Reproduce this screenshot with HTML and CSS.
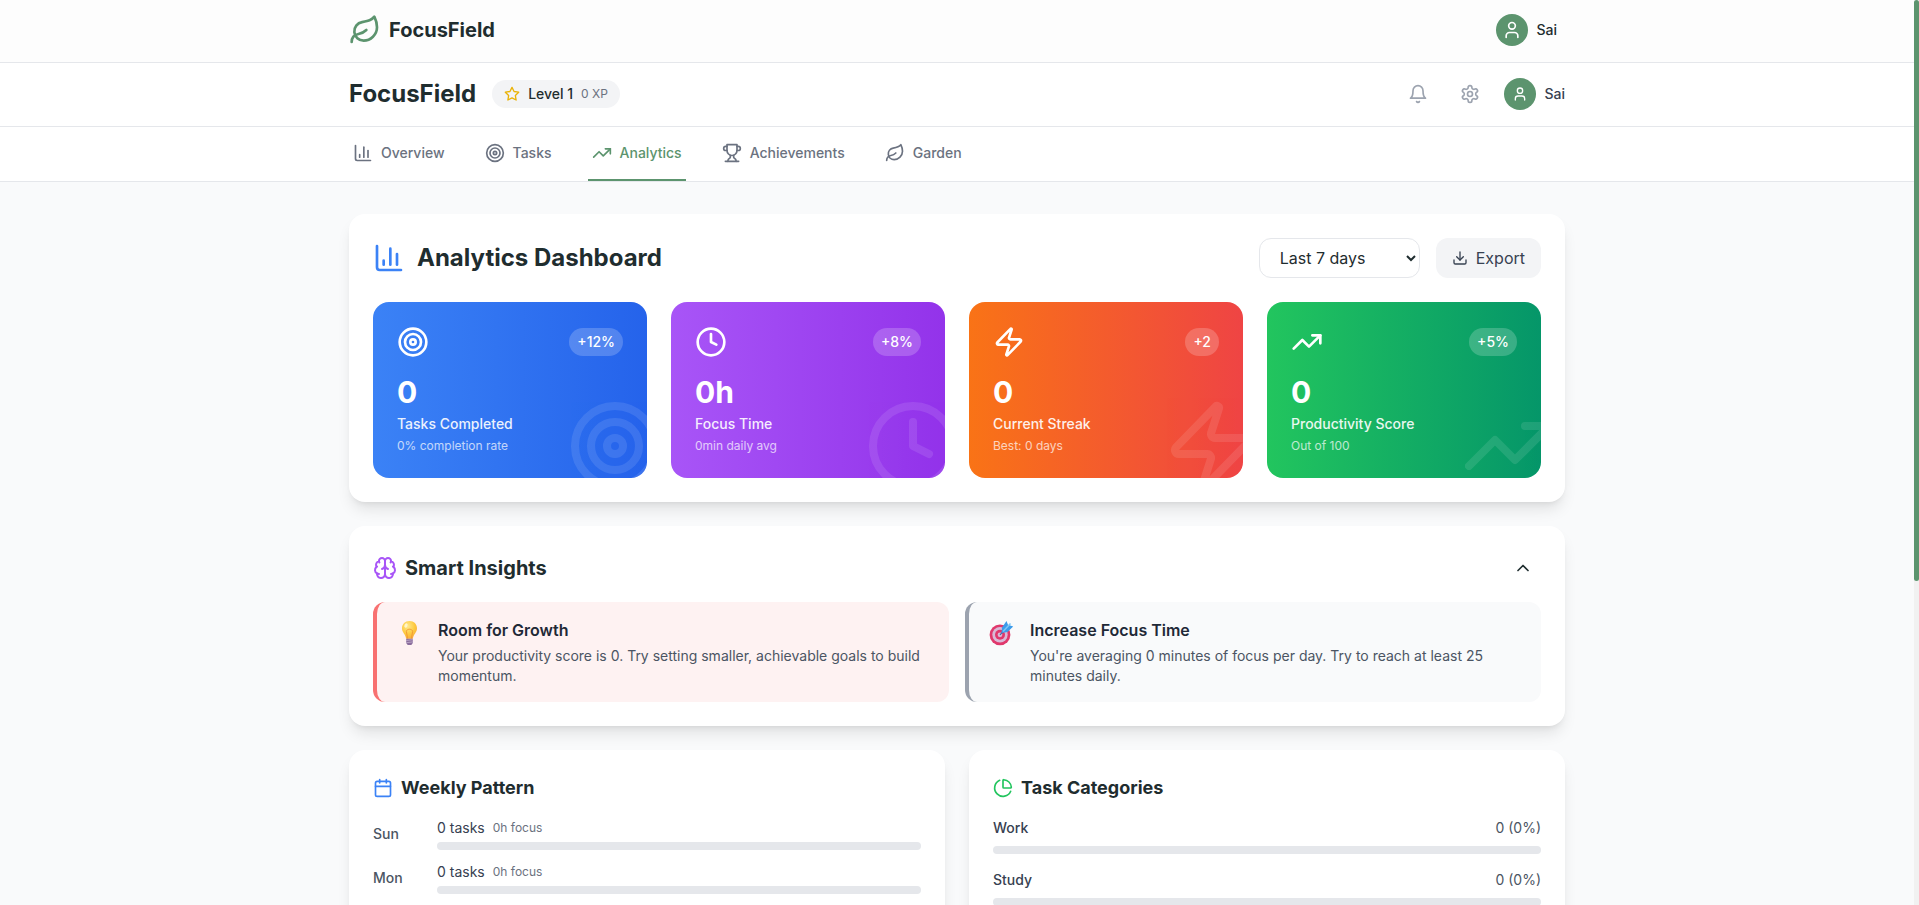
FILE: index.html
```html
<!DOCTYPE html>
<html lang="en">
<head>
    <meta charset="UTF-8">
    <meta name="viewport" content="width=device-width, initial-scale=1.0">
    <title>FocusField - Analytics</title>
    <link rel="stylesheet" href="styles.css">
</head>
<body>
    <!-- Shared icons -->
    <svg class="sprite" aria-hidden="true">
        <symbol id="leaf" viewBox="0 0 24 24">
            <path d="M11 20A7 7 0 0 1 9.8 6.1C15.5 5 17 4.48 19 2c1 2 2 4.18 2 8 0 5.5-4.78 10-10 10Z"/>
            <path d="M2 21c0-3 1.85-5.36 5.08-6C9.5 14.52 12 13 13 12"/>
        </symbol>
        <symbol id="user" viewBox="0 0 24 24">
            <path d="M19 21v-2a4 4 0 0 0-4-4H9a4 4 0 0 0-4 4v2"/>
            <circle cx="12" cy="7" r="4"/>
        </symbol>
        <symbol id="star" viewBox="0 0 24 24">
            <polygon points="12 2 15.09 8.26 22 9.27 17 14.14 18.18 21.02 12 17.77 5.82 21.02 7 14.14 2 9.27 8.91 8.26 12 2"/>
        </symbol>
        <symbol id="bell" viewBox="0 0 24 24">
            <path d="M6 8a6 6 0 0 1 12 0c0 7 3 9 3 9H3s3-2 3-9"/>
            <path d="M10.3 21a1.94 1.94 0 0 0 3.4 0"/>
        </symbol>
        <symbol id="settings" viewBox="0 0 24 24">
            <path d="M12.22 2h-.44a2 2 0 0 0-2 2v.18a2 2 0 0 1-1 1.73l-.43.25a2 2 0 0 1-2 0l-.15-.08a2 2 0 0 0-2.73.73l-.22.38a2 2 0 0 0 .73 2.73l.15.1a2 2 0 0 1 1 1.72v.51a2 2 0 0 1-1 1.74l-.15.09a2 2 0 0 0-.73 2.73l.22.38a2 2 0 0 0 2.73.73l.15-.08a2 2 0 0 1 2 0l.43.25a2 2 0 0 1 1 1.73V20a2 2 0 0 0 2 2h.44a2 2 0 0 0 2-2v-.18a2 2 0 0 1 1-1.73l.43-.25a2 2 0 0 1 2 0l.15.08a2 2 0 0 0 2.73-.73l.22-.39a2 2 0 0 0-.73-2.73l-.15-.08a2 2 0 0 1-1-1.74v-.5a2 2 0 0 1 1-1.74l.15-.09a2 2 0 0 0 .73-2.73l-.22-.38a2 2 0 0 0-2.73-.73l-.15.08a2 2 0 0 1-2 0l-.43-.25a2 2 0 0 1-1-1.73V4a2 2 0 0 0-2-2z"/>
            <circle cx="12" cy="12" r="3"/>
        </symbol>
        <symbol id="chart" viewBox="0 0 24 24">
            <path d="M3 3v16a2 2 0 0 0 2 2h16"/>
            <path d="M18 17V9"/>
            <path d="M13 17V5"/>
            <path d="M8 17v-3"/>
        </symbol>
        <symbol id="target" viewBox="0 0 24 24">
            <circle cx="12" cy="12" r="10"/>
            <circle cx="12" cy="12" r="6"/>
            <circle cx="12" cy="12" r="2"/>
        </symbol>
        <symbol id="trending" viewBox="0 0 24 24">
            <polyline points="22 7 13.5 15.5 8.5 10.5 2 17"/>
            <polyline points="16 7 22 7 22 13"/>
        </symbol>
        <symbol id="trophy" viewBox="0 0 24 24">
            <path d="M6 9H4.5a2.5 2.5 0 0 1 0-5H6"/>
            <path d="M18 9h1.5a2.5 2.5 0 0 0 0-5H18"/>
            <path d="M4 22h16"/>
            <path d="M10 14.66V17c0 .55-.47.98-.97 1.21C7.85 18.75 7 20.24 7 22"/>
            <path d="M14 14.66V17c0 .55.47.98.97 1.21C16.15 18.75 17 20.24 17 22"/>
            <path d="M18 2H6v7a6 6 0 0 0 12 0V2Z"/>
        </symbol>
        <symbol id="clock" viewBox="0 0 24 24">
            <circle cx="12" cy="12" r="10"/>
            <polyline points="12 6 12 12 16 14"/>
        </symbol>
        <symbol id="zap" viewBox="0 0 24 24">
            <path d="M4 14a1 1 0 0 1-.78-1.63l9.9-10.2a.5.5 0 0 1 .86.46l-1.92 6.02A1 1 0 0 0 13 10h7a1 1 0 0 1 .78 1.63l-9.9 10.2a.5.5 0 0 1-.86-.46l1.92-6.02A1 1 0 0 0 11 14z"/>
        </symbol>
        <symbol id="download" viewBox="0 0 24 24">
            <path d="M21 15v4a2 2 0 0 1-2 2H5a2 2 0 0 1-2-2v-4"/>
            <polyline points="7 10 12 15 17 10"/>
            <line x1="12" y1="15" x2="12" y2="3"/>
        </symbol>
        <symbol id="brain" viewBox="0 0 24 24">
            <path d="M12 5a3 3 0 1 0-5.997.125 4 4 0 0 0-2.526 5.77 4 4 0 0 0 .556 6.588A4 4 0 1 0 12 18Z"/>
            <path d="M12 5a3 3 0 1 1 5.997.125 4 4 0 0 1 2.526 5.77 4 4 0 0 1-.556 6.588A4 4 0 1 1 12 18Z"/>
            <path d="M15 13a4.5 4.5 0 0 1-3-4 4.5 4.5 0 0 1-3 4"/>
            <path d="M17.599 6.5a3 3 0 0 0 .399-1.375"/>
            <path d="M6.003 5.125A3 3 0 0 0 6.401 6.5"/>
            <path d="M3.477 10.896a4 4 0 0 1 .585-.396"/>
            <path d="M19.938 10.5a4 4 0 0 1 .585.396"/>
            <path d="M6 18a4 4 0 0 1-1.967-.516"/>
            <path d="M19.967 17.484A4 4 0 0 1 18 18"/>
        </symbol>
        <symbol id="chevron-up" viewBox="0 0 24 24">
            <path d="m18 15-6-6-6 6"/>
        </symbol>
        <symbol id="calendar" viewBox="0 0 24 24">
            <path d="M8 2v4"/>
            <path d="M16 2v4"/>
            <rect width="18" height="18" x="3" y="4" rx="2"/>
            <path d="M3 10h18"/>
        </symbol>
        <symbol id="pie" viewBox="0 0 24 24">
            <path d="M21 12c.552 0 1.005-.449.95-.998a10 10 0 0 0-8.953-8.951c-.55-.055-.998.398-.998.95v8a1 1 0 0 0 1 1z"/>
            <path d="M21.21 15.89A10 10 0 1 1 8 2.83"/>
        </symbol>
    </svg>

    <div class="page">
        <header class="site-header">
            <div class="container bar">
                <a class="logo" href="#">
                    <svg class="icon icon-xl green"><use href="#leaf"/></svg>
                    FocusField
                </a>
                <button class="account" type="button">
                    <span class="avatar"><svg class="icon"><use href="#user"/></svg></span>
                    Sai
                </button>
            </div>
        </header>

        <div class="app-header">
            <div class="container bar">
                <div class="brand">
                    <h1>FocusField</h1>
                    <div class="level">
                        <svg class="icon icon-sm yellow"><use href="#star"/></svg>
                        <span>Level 1</span>
                        <span class="xp">0 XP</span>
                    </div>
                </div>
                <div class="tools">
                    <button class="icon-button" type="button" aria-label="Notifications"><svg class="icon"><use href="#bell"/></svg></button>
                    <button class="icon-button" type="button" aria-label="Settings"><svg class="icon"><use href="#settings"/></svg></button>
                    <div class="profile">
                        <span class="avatar"><svg class="icon icon-sm"><use href="#user"/></svg></span>
                        Sai
                    </div>
                </div>
            </div>
        </div>

        <nav class="tabs">
            <div class="container tab-list">
                <button class="tab" type="button"><svg class="icon"><use href="#chart"/></svg>Overview</button>
                <button class="tab" type="button"><svg class="icon"><use href="#target"/></svg>Tasks</button>
                <button class="tab active" type="button"><svg class="icon"><use href="#trending"/></svg>Analytics</button>
                <button class="tab" type="button"><svg class="icon"><use href="#trophy"/></svg>Achievements</button>
                <button class="tab" type="button"><svg class="icon"><use href="#leaf"/></svg>Garden</button>
            </div>
        </nav>

        <main class="container content">
            <section class="card">
                <div class="card-header dashboard-header">
                    <h2 class="dashboard-title"><svg class="icon icon-xl blue"><use href="#chart"/></svg>Analytics Dashboard</h2>
                    <div class="filters">
                        <select class="range" aria-label="Date range">
                            <option>Last 7 days</option>
                        </select>
                        <button class="export" type="button"><svg class="icon icon-sm"><use href="#download"/></svg>Export</button>
                    </div>
                </div>

                <div class="stats">
                    <div class="stat stat-blue">
                        <div class="stat-top">
                            <svg class="icon icon-xl"><use href="#target"/></svg>
                            <span class="change">+12%</span>
                        </div>
                        <div class="stat-value">0</div>
                        <div class="stat-label">Tasks Completed</div>
                        <div class="stat-note">0% completion rate</div>
                        <svg class="icon stat-art"><use href="#target"/></svg>
                    </div>
                    <div class="stat stat-purple">
                        <div class="stat-top">
                            <svg class="icon icon-xl"><use href="#clock"/></svg>
                            <span class="change">+8%</span>
                        </div>
                        <div class="stat-value">0h</div>
                        <div class="stat-label">Focus Time</div>
                        <div class="stat-note">0min daily avg</div>
                        <svg class="icon stat-art"><use href="#clock"/></svg>
                    </div>
                    <div class="stat stat-orange">
                        <div class="stat-top">
                            <svg class="icon icon-xl"><use href="#zap"/></svg>
                            <span class="change">+2</span>
                        </div>
                        <div class="stat-value">0</div>
                        <div class="stat-label">Current Streak</div>
                        <div class="stat-note">Best: 0 days</div>
                        <svg class="icon stat-art"><use href="#zap"/></svg>
                    </div>
                    <div class="stat stat-green">
                        <div class="stat-top">
                            <svg class="icon icon-xl"><use href="#trending"/></svg>
                            <span class="change">+5%</span>
                        </div>
                        <div class="stat-value">0</div>
                        <div class="stat-label">Productivity Score</div>
                        <div class="stat-note">Out of 100</div>
                        <svg class="icon stat-art"><use href="#trending"/></svg>
                    </div>
                </div>
            </section>

            <section class="card">
                <div class="card-header">
                    <h3 class="insights-title"><svg class="icon icon-lg purple"><use href="#brain"/></svg>Smart Insights</h3>
                    <button class="icon-button dark" type="button" aria-label="Collapse insights"><svg class="icon"><use href="#chevron-up"/></svg></button>
                </div>
                <div class="insights">
                    <div class="insight warning">
                        <svg class="emoji" viewBox="0 0 33 32" role="img" aria-label="Light bulb">
                            <defs>
                                <radialGradient id="bulb" cx="40%" cy="30%" r="75%">
                                    <stop offset="0" stop-color="#ffe88a"/>
                                    <stop offset="0.6" stop-color="#fdc93f"/>
                                    <stop offset="1" stop-color="#f9a93c"/>
                                </radialGradient>
                            </defs>
                            <path d="M16.5 3c-4.5 0-7.5 3.2-7.5 7.3 0 4.3 3.2 5.400 4.200 10.400h6.600c1-5 4.200-6.100 4.200-10.400C24 6.200 21 3 16.500 3Z" fill="url(#bulb)"/>
                            <path d="M14.6 20.5 13.4 13.5c0-3 6.200-3 6.200 0l-1.200 7" fill="none" stroke="#f29b35" stroke-width="1"/>
                            <path d="M13.2 20.7h6.600v4.200l-1.500 2h-3.600l-1.500-2Z" fill="#8a6d9c"/>
                            <path d="M13.2 22.5l6.600-.8M13.200 24.700l6.600-.8" stroke="#c5b2cf" stroke-width="0.8"/>
                            <ellipse cx="13" cy="7.5" rx="1.5" ry="2.3" fill="#fff6c9" transform="rotate(25 13 7.5)"/>
                        </svg>
                        <div>
                            <h4>Room for Growth</h4>
                            <p>Your productivity score is 0. Try setting smaller, achievable goals to build momentum.</p>
                        </div>
                    </div>
                    <div class="insight neutral">
                        <svg class="emoji" viewBox="0 0 33 32" role="img" aria-label="Target">
                            <circle cx="15" cy="16.8" r="10.4" fill="#e0386c"/>
                            <circle cx="15" cy="16.8" r="7.7" fill="#d9b8d6"/>
                            <circle cx="15" cy="16.8" r="5" fill="#e0386c"/>
                            <circle cx="15" cy="16.8" r="2.4" fill="#d9b8d6"/>
                            <path d="M15 16.8 21.5 10" stroke="#3c6fae" stroke-width="1.2"/>
                            <path d="M16.5 15 17 9.5 21.5 3 23 6.800 28.200 8.500 22.500 14Z" fill="#3c9bea"/>
                            <path d="M18 13.5 25.5 5.5" stroke="#7cc6f7" stroke-width="1.6"/>
                        </svg>
                        <div>
                            <h4>Increase Focus Time</h4>
                            <p>You're averaging 0 minutes of focus per day. Try to reach at least 25 minutes daily.</p>
                        </div>
                    </div>
                </div>
            </section>

            <div class="columns">
                <section class="card">
                    <h3 class="panel-title"><svg class="icon blue"><use href="#calendar"/></svg>Weekly Pattern</h3>
                    <div class="days">
                        <div class="day">
                            <span class="day-name">Sun</span>
                            <div class="day-data">
                                <div class="day-text">0 tasks <small>0h focus</small></div>
                                <div class="track"></div>
                            </div>
                        </div>
                        <div class="day">
                            <span class="day-name">Mon</span>
                            <div class="day-data">
                                <div class="day-text">0 tasks <small>0h focus</small></div>
                                <div class="track"></div>
                            </div>
                        </div>
                    </div>
                </section>

                <section class="card">
                    <h3 class="panel-title"><svg class="icon emerald"><use href="#pie"/></svg>Task Categories</h3>
                    <div class="categories">
                        <div class="category">
                            <div class="category-text"><span>Work</span><span class="count">0 (0%)</span></div>
                            <div class="track"></div>
                        </div>
                        <div class="category">
                            <div class="category-text"><span>Study</span><span class="count">0 (0%)</span></div>
                            <div class="track"></div>
                        </div>
                    </div>
                </section>
            </div>
        </main>
    </div>

    <div class="scrollbar" aria-hidden="true"><div class="scroll-thumb"></div></div>
</body>
</html>
```

FILE: styles.css
```css
* {
    box-sizing: border-box;
}
body {
    display: flex;
    height: 100vh;
    margin: 0;
    overflow: hidden;
    background: #f9fafb;
    color: #1f2d2f;
    font-family: Inter, "Liberation Sans", sans-serif;
    font-size: 16px;
    line-height: 24px;
}
h1, h2, h3, h4, p {
    margin: 0;
}
button, select {
    font: inherit;
    color: inherit;
}
button {
    padding: 0;
    border: 0;
    background: none;
    cursor: pointer;
}
.sprite {
    position: absolute;
    width: 0;
    height: 0;
}

/* Page shell */
.page {
    flex: 1;
    min-width: 0;
    overflow-y: auto;
    scrollbar-width: none;
    background: #f9fafb;
}
.scrollbar {
    width: 5px;
    background: #f1f1f1;
}
.scroll-thumb {
    height: 64.2%;
    border-radius: 3px;
    background: #5c946e;
}
.container {
    max-width: 1280px;
    margin: 0 auto;
    padding: 0 32px;
}
.bar {
    display: flex;
    align-items: center;
    justify-content: space-between;
}

/* Icons */
.icon {
    flex: none;
    width: 20px;
    height: 20px;
    fill: none;
    stroke: currentColor;
    stroke-width: 2;
    stroke-linecap: round;
    stroke-linejoin: round;
}
.icon-sm {
    width: 16px;
    height: 16px;
}
.icon-lg {
    width: 24px;
    height: 24px;
}
.icon-xl {
    width: 32px;
    height: 32px;
}
.green { color: #5c946e; }
.yellow { color: #eab308; }
.blue { color: #3b82f6; }
.purple { color: #a855f7; }
.emerald { color: #22c55e; }

/* Headers */
.site-header {
    padding: 14px 0 16px;
    border-bottom: 1px solid #e5e7eb;
    background: #fdfdfd;
}
.logo {
    display: flex;
    align-items: center;
    gap: 8px;
    color: inherit;
    font-size: 20px;
    font-weight: 700;
    text-decoration: none;
}
.account, .profile {
    display: flex;
    align-items: center;
    gap: 8px;
    font-size: 14px;
    font-weight: 500;
}
.account {
    padding-right: 8px;
}
.profile {
    color: #374151;
}
.avatar {
    display: flex;
    align-items: center;
    justify-content: center;
    width: 32px;
    height: 32px;
    border-radius: 50%;
    background: #5c946e;
    color: white;
}
.app-header {
    padding: 15px 0 16px;
    border-bottom: 1px solid #e5e7eb;
    background: white;
}
.brand, .tools {
    display: flex;
    align-items: center;
    gap: 16px;
}
.brand h1 {
    font-size: 24px;
    line-height: 32px;
    font-weight: 700;
}
.level {
    display: flex;
    align-items: center;
    gap: 8px;
    padding: 4px 12px;
    border-radius: 14px;
    background: #f3f4f6;
    font-size: 14px;
    line-height: 20px;
    font-weight: 500;
}
.xp {
    color: #6b7280;
    font-size: 12px;
    font-weight: 400;
}
.tools {
    height: 32px;
}
.icon-button {
    display: flex;
    padding: 8px;
    border-radius: 8px;
    color: #9ca3af;
}
.icon-button.dark {
    color: inherit;
}

/* Tabs */
.tabs {
    border-bottom: 1px solid #e5e7eb;
    background: white;
}
.tab-list {
    display: flex;
    gap: 32px;
}
.tab {
    display: flex;
    align-items: center;
    gap: 8px;
    padding: 16px 4px;
    border-bottom: 2px solid transparent;
    color: #6b7280;
    font-size: 14px;
    line-height: 20px;
    font-weight: 500;
}
.tab.active {
    border-color: #5c946e;
    color: #5c946e;
}

/* Cards */
.content {
    display: grid;
    gap: 24px;
    padding-top: 32px;
    padding-bottom: 32px;
}
.card {
    padding: 24px;
    border-radius: 16px;
    background: white;
    box-shadow: 0 10px 15px -3px rgba(0,0,0,0.1), 0 4px 6px -4px rgba(0,0,0,0.1);
}
.card-header {
    display: flex;
    align-items: center;
    justify-content: space-between;
    margin-bottom: 16px;
}
.dashboard-header {
    margin-bottom: 24px;
}
.dashboard-title {
    display: flex;
    align-items: center;
    gap: 12px;
    font-size: 24px;
    line-height: 32px;
    font-weight: 700;
}
.filters {
    display: flex;
    gap: 16px;
}
.range {
    width: 161px;
    height: 40px;
    padding: 0 0 0 16px;
    border: 1px solid #e5e7eb;
    border-radius: 12px;
    background: white;
}
.export {
    display: flex;
    align-items: center;
    gap: 8px;
    padding: 8px 16px;
    border-radius: 12px;
    background: #f3f4f6;
    color: #374151;
}

/* Stat tiles */
.stats {
    display: grid;
    grid-template-columns: repeat(4, 1fr);
    gap: 24px;
}
.stat {
    position: relative;
    overflow: hidden;
    padding: 24px;
    border-radius: 16px;
    color: white;
}
.stat-blue { background: linear-gradient(to right, #3b82f6, #2563eb); }
.stat-purple { background: linear-gradient(to right, #a855f7, #9333ea); }
.stat-orange { background: linear-gradient(to right, #f97316, #ef4444); }
.stat-green { background: linear-gradient(to right, #22c55e, #059669); }
.stat-top {
    display: flex;
    align-items: center;
    justify-content: space-between;
    margin-bottom: 16px;
}
.change {
    padding: 4px 8px;
    border-radius: 14px;
    background: rgba(255,255,255,0.2);
    font-size: 14px;
    line-height: 20px;
    font-weight: 500;
}
.stat-value {
    margin-bottom: 4px;
    font-size: 30px;
    line-height: 36px;
    font-weight: 700;
}
.stat-label {
    margin-bottom: 4px;
    font-size: 14px;
    line-height: 20px;
    font-weight: 500;
    opacity: 0.9;
}
.stat-note {
    font-size: 12px;
    line-height: 16px;
    opacity: 0.7;
}
.stat-art {
    position: absolute;
    right: -16px;
    bottom: -16px;
    width: 96px;
    height: 96px;
    opacity: 0.1;
}

/* Insights */
.insights-title {
    display: flex;
    align-items: center;
    gap: 8px;
    font-size: 20px;
    line-height: 28px;
    font-weight: 700;
}
.insights {
    display: grid;
    grid-template-columns: 1fr 1fr;
    gap: 16px;
}
.insight {
    display: flex;
    gap: 12px;
    padding: 16px;
    border-left: 4px solid;
    border-radius: 12px;
}
.insight.warning {
    border-color: #f87171;
    background: #fef2f2;
}
.insight.neutral {
    border-color: #9ca3af;
    background: #f9fafb;
}
.emoji {
    flex: none;
    width: 33px;
    height: 32px;
}
.insight h4 {
    margin-bottom: 4px;
    color: #1f2937;
    font-size: 16px;
    font-weight: 600;
}
.insight p {
    color: #4b5563;
    font-size: 14px;
    line-height: 20px;
}

/* Bottom panels */
.columns {
    display: grid;
    grid-template-columns: 1fr 1fr;
    gap: 24px;
}
.panel-title {
    display: flex;
    align-items: center;
    gap: 8px;
    margin-bottom: 16px;
    font-size: 18px;
    line-height: 28px;
    font-weight: 700;
}
.days {
    display: grid;
    gap: 12px;
}
.day {
    display: flex;
    align-items: center;
    gap: 16px;
    font-size: 14px;
    line-height: 20px;
}
.day-name {
    width: 48px;
    color: #4b5563;
    font-weight: 500;
}
.day-data {
    flex: 1;
}
.day-text {
    display: flex;
    align-items: center;
    gap: 8px;
    margin-bottom: 4px;
    color: #374151;
}
.day-text small {
    color: #6b7280;
    font-size: 12px;
}
.track {
    height: 8px;
    border-radius: 4px;
    background: #e5e7eb;
}
.categories {
    display: grid;
    gap: 16px;
}
.category-text {
    display: flex;
    justify-content: space-between;
    margin-bottom: 8px;
    color: #374151;
    font-size: 14px;
    line-height: 20px;
    font-weight: 500;
}
.count {
    color: #4b5563;
    font-weight: 400;
}
```
